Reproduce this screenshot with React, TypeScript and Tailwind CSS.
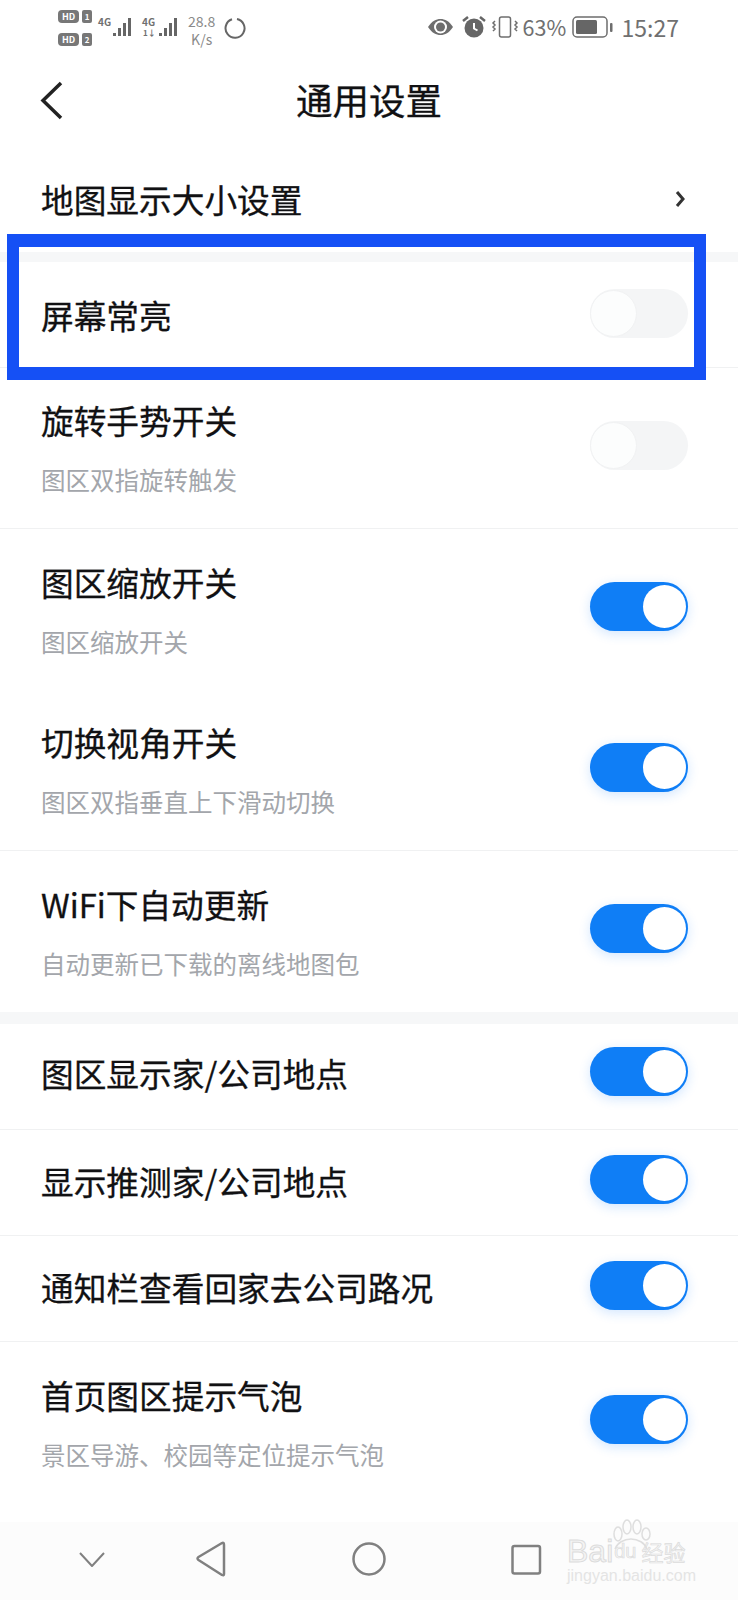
const font = "font-['Noto_Sans_CJK_SC','Noto_Sans',sans-serif]";

function Toggle({ on, className }: { on: boolean; className?: string }) {
  if (on) {
    return (
      <div className={`flex h-[49px] w-[98px] shrink-0 items-center justify-end rounded-full bg-[#0f7ef6] pr-[2px] shadow-[0_3px_12px_rgba(30,130,250,0.2)] ${className ?? ""}`}>
        <div className="h-[43px] w-[43px] rounded-full bg-white" />
      </div>
    );
  }
  return (
    <div className={`flex h-[49px] w-[98px] shrink-0 items-center rounded-full bg-[#f4f5f6] ${className ?? ""}`}>
      <div className="h-[47px] w-[47px] rounded-full border border-[#f1f2f3] bg-[#fcfdfd]" />
    </div>
  );
}

function Row({ title, sub, on, divider, className }: { title: string; sub?: string; on: boolean; divider?: boolean; className?: string }) {
  return (
    <div className={`flex items-center justify-between pl-[41px] pr-[50px] ${sub ? "h-[161px]" : "h-[106px]"} ${divider ? "border-b border-[#f0f1f2]" : ""} ${className ?? ""}`}>
      <div className={`flex flex-col ${sub ? "mt-[4px]" : "mb-[4px]"}`}>
        <div className="text-[32.7px] leading-[40px] text-[#111113] [-webkit-text-stroke:0.3px_#111113]">{title}</div>
        {sub && <div className="mt-[20px] text-[24.5px] leading-[40px] text-[#a3a6ab]">{sub}</div>}
      </div>
      <Toggle on={on} className="mb-[6px]" />
    </div>
  );
}

function Bars({ x = 0 }: { x?: number }) {
  return (
    <g fill="#666">
      <rect x={x} y="16" width="3" height="3" />
      <rect x={x + 5} y="11" width="3" height="8" />
      <rect x={x + 10} y="6" width="3" height="13" />
      <rect x={x + 15} y="1" width="3" height="18" />
    </g>
  );
}

function HdBadge({ n }: { n: string }) {
  return (
    <div className="flex gap-[3px]">
      <span className="flex h-[13px] w-[21px] items-center justify-center rounded-[4px] bg-[#777] text-[9px] leading-none font-bold text-white">HD</span>
      <span className="flex h-[13px] w-[10px] items-center justify-center rounded-[2px] bg-[#777] text-[8px] leading-none font-bold text-white">{n}</span>
    </div>
  );
}

function StatusBar() {
  return (
    <div className="flex h-[50px] items-start justify-between pl-[58px] pr-[59px] pt-[10px] text-[#707070]">
      <div className="flex items-start">
        <div className="flex w-[36px] flex-col gap-[10px]">
          <HdBadge n="1" />
          <HdBadge n="2" />
        </div>
        <div className="ml-[4px] mt-[6px] flex">
          <span className="text-[10px] leading-[12px] font-bold">4G</span>
          <svg width="24" height="20" className="mt-[1px]"><Bars x={2} /></svg>
        </div>
        <div className="relative ml-[7px] mt-[6px] flex">
          <span className="text-[10px] leading-[12px] font-bold">4G</span>
          <span className="absolute left-[1px] top-[13px] text-[8px] leading-[8px] font-bold">1↓</span>
          <svg width="22" height="20" className="mt-[1px]"><Bars x={4} /></svg>
        </div>
        <div className="ml-[8px] mt-[2px] flex w-[33px] flex-col items-center text-[14px] leading-[18px] text-[#8a8a8a]">
          <span>28.8</span>
          <span>K/s</span>
        </div>
        <svg width="22" height="22" viewBox="0 0 22 22" className="ml-[6px] mt-[7px]" fill="none" stroke="#666" strokeWidth="2">
          <path d="M13 2a9.5 9.5 0 1 1-5 .3" />
        </svg>
      </div>
      <div className="flex items-center pt-[5px]">
        <svg width="27" height="20" viewBox="0 0 27 20">
          <path d="M1 10C5 4 9 2 13.500 2S22 4 26 10c-4 6-8 8-12.500 8S5 16 1 10z" fill="#6e6e6e" />
          <circle cx="13.500" cy="10" r="6.500" fill="#fff" />
          <circle cx="13.500" cy="10" r="4.500" fill="#6e6e6e" />
        </svg>
        <svg width="26" height="24" viewBox="0 0 26 24" className="ml-[7px]">
          <circle cx="13" cy="13" r="9.500" fill="#666" />
          <path d="M13 8v5.500l3.500 2" fill="none" stroke="#fff" strokeWidth="2" />
          <path d="M2 6l5-4M24 6l-5-4" stroke="#666" strokeWidth="2.500" fill="none" />
        </svg>
        <svg width="28" height="22" viewBox="0 0 28 22" className="ml-[4px]" fill="none" stroke="#6e6e6e" strokeWidth="1.500">
          <rect x="8.500" y="1" width="11" height="20" rx="2" />
          <path d="M4 5l-2 2 2 2-2 2 2 2-2 2M24 5l2 2-2 2 2 2-2 2 2 2" />
        </svg>
        <span className="ml-[4px] w-[45px] text-[21.500px] leading-none">63%</span>
        <svg width="41" height="22" viewBox="0 0 41 22" className="ml-[4px]">
          <rect x="1" y="1" width="34" height="20" rx="4" fill="none" stroke="#6e6e6e" strokeWidth="1.500" />
          <rect x="4" y="4" width="21" height="14" rx="1.500" fill="#666" />
          <rect x="38" y="7" width="2.500" height="9" rx="1" fill="#6e6e6e" />
        </svg>
        <span className="ml-[9px] text-[23px] leading-none">15:27</span>
      </div>
    </div>
  );
}

function NavBar() {
  return (
    <div className="h-[78px] bg-[#fcfcfc] pt-[18px]">
      <svg width="738" height="44" viewBox="0 0 738 44" fill="none" stroke="#808080" strokeWidth="2.500" strokeLinejoin="round">
        <path d="M80 13l12 13 12-13" strokeWidth="2" />
        <path d="M224 5v29q0 2-2 1L198.500 20q-2-1.500 0-3L222 3q2-1 2 2z" />
        <ellipse cx="369" cy="19" rx="15.500" ry="15.500" />
        <rect x="512.500" y="6" width="27.500" height="27.500" rx="2" />
      </svg>
    </div>
  );
}

export default function App() {
  return (
    <div className={`relative h-[1600px] w-[738px] overflow-hidden bg-white ${font}`}>
      <StatusBar />

      <div className="relative flex h-[100px] items-center justify-center">
        <svg width="24" height="40" viewBox="0 0 24 40" className="absolute left-[40px] top-[31px]" fill="none" stroke="#222" strokeWidth="3.500">
          <path d="M21 2L3 19.500 21 37" />
        </svg>
        <span className="text-[36.500px] leading-none text-[#111113] [-webkit-text-stroke:0.3px_#111113]">通用设置</span>
      </div>

      <div className="flex h-[102px] items-center justify-between pb-[4px] pl-[41px] pr-[51px]">
        <span className="text-[32.7px] leading-[40px] text-[#111113] [-webkit-text-stroke:0.3px_#111113]">地图显示大小设置</span>
        <svg width="12" height="20" viewBox="0 0 12 20" fill="none" stroke="#333" strokeWidth="3">
          <path d="M2 3l6 7-6 7" />
        </svg>
      </div>
      <div className="h-[10px] bg-[#f6f7f8]" />

      <Row title="屏幕常亮" on={false} divider className="pt-[4px]" />
      <Row title="旋转手势开关" sub="图区双指旋转触发" on={false} divider />
      <Row title="图区缩放开关" sub="图区缩放开关" on />
      <Row title="切换视角开关" sub="图区双指垂直上下滑动切换" on divider />
      <Row title="WiFi下自动更新" sub="自动更新已下载的离线地图包" on />
      <div className="h-[12px] bg-[#f6f7f8]" />
      <Row title="图区显示家/公司地点" on divider className="pb-[4px]" />
      <Row title="显示推测家/公司地点" on divider />
      <Row title="通知栏查看回家去公司路况" on divider />
      <Row title="首页图区提示气泡" sub="景区导游、校园等定位提示气泡" on />

      <div className="absolute inset-x-0 bottom-0">
        <NavBar />
      </div>

      {/* highlight box drawn over the screen */}
      <div className="absolute left-[7px] top-[234px] h-[146px] w-[699px] border-x-[12px] border-y-[13px] border-[#1550f5]" />

      {/* watermark */}
      <div className="absolute left-[567px] top-[1536px] w-[130px] text-[#f4f4f4]">
        <svg width="44" height="30" viewBox="0 0 44 30" className="absolute left-[42px] top-[-17px]" fill="none" stroke="#dedede" strokeWidth="1.500">
          <ellipse cx="9" cy="15" rx="4" ry="7" />
          <ellipse cx="18" cy="8" rx="4" ry="7" />
          <ellipse cx="28" cy="8" rx="4" ry="7" />
          <ellipse cx="37" cy="15" rx="4" ry="6" />
          <path d="M6 30c2-6 9-10 16-10s14 4 16 10" />
        </svg>
        <div className="flex items-center font-['Liberation_Sans',sans-serif] text-[32px] leading-[30px] [-webkit-text-stroke:1px_#dcdcdc]">
          <span>Bai</span>
          <span className="ml-[1px] text-[20px] [-webkit-text-stroke:0.7px_#dcdcdc]">du</span>
          <span className="ml-[5px] font-['Noto_Sans_CJK_SC',sans-serif] text-[22px] [-webkit-text-stroke:0.7px_#dcdcdc]">经验</span>
        </div>
        <div className="mt-[1px] font-['Liberation_Sans',sans-serif] text-[16px] leading-[18px] whitespace-nowrap text-[#e4e4e4]">jingyan.baidu.com</div>
      </div>
    </div>
  );
}
